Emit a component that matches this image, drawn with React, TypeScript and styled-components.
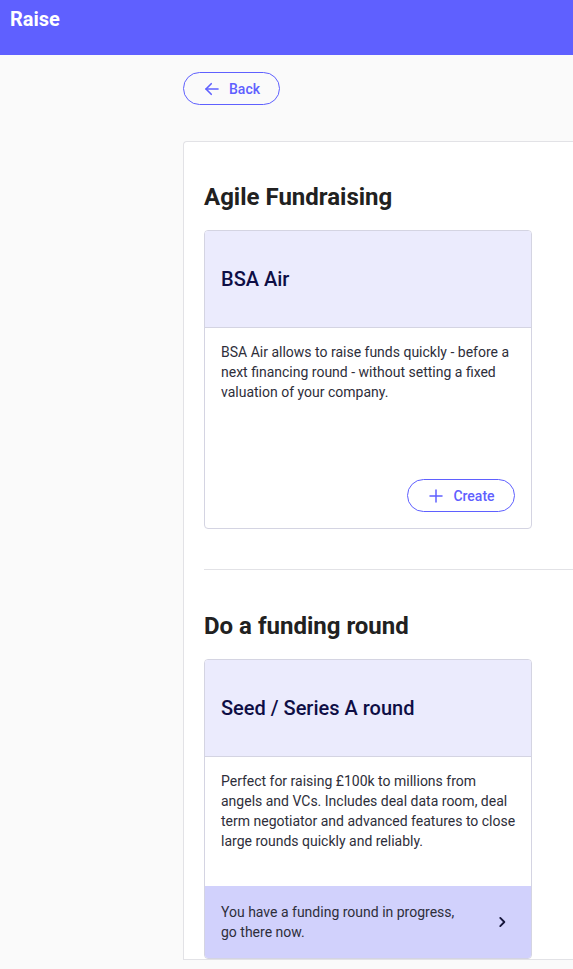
import styled, { createGlobalStyle } from 'styled-components'

const colors = {
    primary: '#5f60ff',
    pageBg: '#fafafa',
    panelBorder: '#e2e2e6',
    cardBorder: '#d4d4e2',
    cardHead: '#ebebfd',
    cardFoot: '#d1d1fc',
    heading: '#212121',
    title: '#0e0e45',
    text: '#2e2e3a',
}

const GlobalStyle = createGlobalStyle`
    html, body {
        margin: 0;
        padding: 0;
        background: ${colors.pageBg};
        font-family: Roboto, "Noto Sans", Arial, sans-serif;
        overflow-x: hidden;
    }
    * { box-sizing: border-box; }
`

const TopBar = styled.header`
    height: 55px;
    background: ${colors.primary};
    color: #fff;
    padding: 7px 10px 0;
`

const AppTitle = styled.h1`
    margin: 0;
    font-size: 20px;
    line-height: 24px;
    font-weight: 700;
`

const Content = styled.main`
    padding: 17px 0 0 183px;
    display: flex;
    flex-direction: column;
    align-items: flex-start;
`

const OutlineButton = styled.button`
    display: inline-flex;
    align-items: center;
    justify-content: center;
    gap: 8px;
    height: ${p => p.$height}px;
    width: ${p => p.$width}px;
    border: 1px solid ${colors.primary};
    border-radius: 999px;
    background: transparent;
    color: ${colors.primary};
    font-family: inherit;
    font-size: 14px;
    font-weight: 500;
    cursor: pointer;
    padding: 0;
`

const Panel = styled.section`
    margin-top: 36px;
    align-self: stretch;
    background: #fff;
    border: 1px solid ${colors.panelBorder};
    border-right: none;
    border-radius: 4px 0 0 0;
    padding: 39px 0 0 20px;
`

const SectionTitle = styled.h2`
    margin: 0 0 17px;
    font-size: 24px;
    line-height: 32px;
    font-weight: 700;
    color: ${colors.heading};
`

const Divider = styled.hr`
    border: none;
    border-top: 1px solid ${colors.panelBorder};
    margin: 40px 0;
`

const Card = styled.div`
    width: 328px;
    border: 1px solid ${colors.cardBorder};
    border-radius: 4px;
    background: #fff;
    overflow: hidden;
    display: flex;
    flex-direction: column;
`

const CardHead = styled.div`
    height: 97px;
    background: ${colors.cardHead};
    border-bottom: 1px solid ${colors.cardBorder};
    display: flex;
    align-items: center;
    padding: 0 16px;
`

const CardTitle = styled.h3`
    margin: 0;
    font-size: 20px;
    font-weight: 500;
    color: ${colors.title};
`

const CardBody = styled.div`
    height: ${p => p.$height}px;
    padding: 14px 12px 16px 16px;
    display: flex;
    flex-direction: column;
`

const CardText = styled.p`
    margin: 0;
    font-size: 14px;
    line-height: 20px;
    color: ${colors.text};
`

const CardActions = styled.div`
    margin-top: auto;
    padding-right: 4px;
    display: flex;
    justify-content: flex-end;
`

const CardFooter = styled.a`
    display: flex;
    align-items: center;
    justify-content: space-between;
    background: ${colors.cardFoot};
    padding: 16px 22px 16px 16px;
    font-size: 14px;
    line-height: 20px;
    color: ${colors.text};
    text-decoration: none;
    cursor: pointer;
`

const FooterText = styled.span`
    max-width: 250px;
`

const ArrowLeft = () => (
    <svg width="18" height="18" viewBox="0 0 24 24" fill="none" stroke="currentColor" strokeWidth="2.2" strokeLinecap="round" strokeLinejoin="round">
        <path d="M20 12H4" />
        <path d="M11 5l-7 7 7 7" />
    </svg>
)

const Plus = () => (
    <svg width="18" height="18" viewBox="0 0 24 24" fill="none" stroke="currentColor" strokeWidth="2" strokeLinecap="round">
        <path d="M12 4v16M4 12h16" />
    </svg>
)

const Chevron = () => (
    <svg width="14" height="14" viewBox="0 0 24 24" fill="none" stroke="#15153a" strokeWidth="3.2" strokeLinecap="round" strokeLinejoin="round">
        <path d="M9 5l7 7-7 7" />
    </svg>
)

const App = () => {
    return (
        <>
            <GlobalStyle />
            <TopBar>
                <AppTitle>Raise</AppTitle>
            </TopBar>
            <Content>
                <OutlineButton $width={97} $height={33}>
                    <ArrowLeft />
                    Back
                </OutlineButton>
                <Panel>
                    <SectionTitle>Agile Fundraising</SectionTitle>
                    <Card>
                        <CardHead>
                            <CardTitle>BSA Air</CardTitle>
                        </CardHead>
                        <CardBody $height={200}>
                            <CardText>
                                BSA Air allows to raise funds quickly - before a next financing round - without setting a fixed valuation of your company.
                            </CardText>
                            <CardActions>
                                <OutlineButton $width={108} $height={33}>
                                    <Plus />
                                    Create
                                </OutlineButton>
                            </CardActions>
                        </CardBody>
                    </Card>
                    <Divider />
                    <SectionTitle>Do a funding round</SectionTitle>
                    <Card>
                        <CardHead>
                            <CardTitle>Seed / Series A round</CardTitle>
                        </CardHead>
                        <CardBody $height={129}>
                            <CardText>
                                Perfect for raising £100k to millions from angels and VCs. Includes deal data room, deal term negotiator and advanced features to close large rounds quickly and reliably.
                            </CardText>
                        </CardBody>
                        <CardFooter>
                            <FooterText>You have a funding round in progress, go there now.</FooterText>
                            <Chevron />
                        </CardFooter>
                    </Card>
                </Panel>
            </Content>
        </>
    )
}

export default App
